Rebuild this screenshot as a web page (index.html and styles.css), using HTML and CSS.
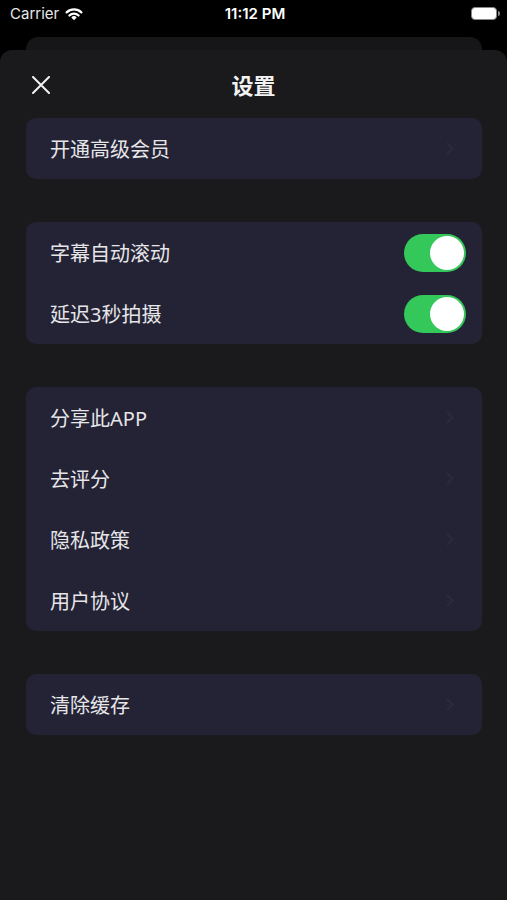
FILE: index.html
```html
<html>
  <head>
    <meta charset="utf-8">
    <title>设置</title>
    <link rel="stylesheet" href="styles.css">
  </head>
  <body>
    <div class="status-bar">
      <div class="carrier">Carrier
        <svg class="wifi" width="18" height="14" viewBox="0 0 18 14">
          <path d="M9 13.2 L6.3 10.4 A3.9 3.9 0 0 1 11.7 10.4 Z" fill="#fff"/>
          <path d="M4.4 8.5 A6.6 6.6 0 0 1 13.6 8.5" stroke="#fff" stroke-width="2.2" fill="none" stroke-linecap="round"/>
          <path d="M1.6 5.4 A10.6 10.6 0 0 1 16.4 5.4" stroke="#fff" stroke-width="2.2" fill="none" stroke-linecap="round"/>
        </svg>
      </div>
      <div class="time">11:12 PM</div>
      <div class="battery"><span class="battery-body"></span><span class="battery-cap"></span></div>
    </div>

    <div class="back-card"></div>

    <div class="sheet">
      <div class="header">
        <svg class="close" width="18" height="18" viewBox="0 0 18 18">
          <path d="M1 1 L17 17 M17 1 L1 17" stroke="#f2f2f2" stroke-width="2" stroke-linecap="round"/>
        </svg>
        <h1 class="title">设置</h1>
      </div>

      <div class="groups">
        <div class="group">
          <div class="row"><span class="label">开通高级会员</span><span class="chevron"></span></div>
        </div>

        <div class="group">
          <div class="row"><span class="label">字幕自动滚动</span><span class="switch on"><span class="knob"></span></span></div>
          <div class="row"><span class="label">延迟3秒拍摄</span><span class="switch on"><span class="knob"></span></span></div>
        </div>

        <div class="group">
          <div class="row"><span class="label">分享此APP</span><span class="chevron"></span></div>
          <div class="row"><span class="label">去评分</span><span class="chevron"></span></div>
          <div class="row"><span class="label">隐私政策</span><span class="chevron"></span></div>
          <div class="row"><span class="label">用户协议</span><span class="chevron"></span></div>
        </div>

        <div class="group">
          <div class="row"><span class="label">清除缓存</span><span class="chevron"></span></div>
        </div>
      </div>
    </div>
  </body>
</html>
```
FILE: styles.css
```css
body {
  margin: 0;
  background: #000;
  color: #ececec;
  font-family: "Noto Sans", "Noto Sans CJK SC", sans-serif;
  height: 900px;
  overflow: hidden;
}
.status-bar {
  height: 37px;
  display: flex;
  align-items: center;
  justify-content: space-between;
  padding: 0 7px 10px 10px;
  box-sizing: border-box;
  color: #fff;
  font-size: 15px;
  font-family: Inter, "Noto Sans", sans-serif;
}
.carrier {
  display: flex;
  align-items: center;
  gap: 6px;
  width: 110px;
  color: #e8e8e8;
}
.time {
  font-weight: 600;
}
.battery {
  width: 110px;
  display: flex;
  justify-content: flex-end;
  align-items: center;
}
.battery-body {
  width: 24px;
  height: 11px;
  background: #fff;
  border: 1.5px solid #888;
  border-radius: 4px;
}
.battery-cap {
  width: 2px;
  height: 5px;
  background: #888;
  border-radius: 0 2px 2px 0;
  margin-left: 1px;
}
.back-card {
  height: 13px;
  margin: 0 25px 0 26px;
  background: #161618;
  border-radius: 12px 12px 0 0;
}
.sheet {
  background: #1a1a1c;
  border-radius: 12px 12px 0 0;
  height: 850px;
}
.header {
  height: 68px;
  display: flex;
  align-items: center;
  justify-content: center;
  position: relative;
}
.close {
  position: absolute;
  left: 32px;
  top: 26px;
}
.title {
  margin: 0;
  font-size: 22px;
  font-weight: 600;
  color: #f2f2f2;
}
.groups {
  display: flex;
  flex-direction: column;
  gap: 43px;
  margin: 0 25px 0 26px;
}
.group {
  background: #242336;
  border-radius: 10px;
}
.row {
  height: 61px;
  display: flex;
  align-items: center;
  justify-content: space-between;
  padding: 0 16px 0 24px;
}
.label {
  font-size: 20px;
  color: #e6e6e8;
}
.chevron {
  width: 7px;
  height: 7px;
  border-top: 2px solid #2b2a3e;
  border-right: 2px solid #2b2a3e;
  transform: rotate(45deg);
  margin-right: 14px;
}
.switch {
  width: 62px;
  height: 38px;
  border-radius: 19px;
  background: #34c759;
  display: flex;
  align-items: center;
  justify-content: flex-end;
  padding: 0 2px;
  box-sizing: border-box;
}
.knob {
  width: 34px;
  height: 34px;
  border-radius: 50%;
  background: #fff;
}
```
